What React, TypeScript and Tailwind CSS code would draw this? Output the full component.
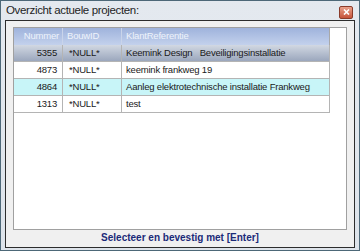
import React from "react";

const rows = [
  { n: "5355", b: "*NULL*", k: "Keemink Design   Beveiligingsinstallatie", kind: "sel" },
  { n: "4873", b: "*NULL*", k: "keemink frankweg 19", kind: "white" },
  { n: "4864", b: "*NULL*", k: "Aanleg elektrotechnische installatie Frankweg", kind: "cyan" },
  { n: "1313", b: "*NULL*", k: "test", kind: "white" },
];

export default function App() {
  return (
    <div
      className="w-[360px] h-[251px] border border-[#4d6878] bg-gradient-to-b from-[#e4e9ef] to-[#dde3ea] flex flex-col overflow-hidden"
      style={{ fontFamily: '"Liberation Sans", Arial, sans-serif' }}
    >
      <div className="h-[19px] flex items-center justify-between pl-[5px] pr-[6px] shrink-0">
        <span className="text-[11.5px] tracking-[-0.35px] text-[#1e1e1e] leading-none mt-[1px]">Overzicht actuele projecten:</span>
        <div className="w-[14px] h-[13px] mt-[3px] rounded-[2px] border border-[#8a3b2a] bg-gradient-to-b from-[#e8a08a] to-[#c5533a] flex items-center justify-center">
          <svg width="7" height="6" viewBox="0 0 7 6">
            <path d="M1 0.5 L6 5.5 M6 0.5 L1 5.5" stroke="white" strokeWidth="1.6" />
          </svg>
        </div>
      </div>
      <div className="flex-1 mx-[4px] mb-[4px] border border-[#2c2c2c] bg-[#f0f0f0] flex flex-col">
        <div className="mx-[7px] mt-[6px] h-[203px] border border-[#a0a0a0] bg-white flex flex-col text-[9.5px] tracking-[-0.2px]">
          <div className="w-[316px] flex h-[17px] bg-gradient-to-b from-[#9fb3dc] to-[#c3d1ec] text-[#eef3fb] border-r border-[#a8a8a8]">
            <div className="w-[49px] shrink-0 flex items-center justify-end pr-[3px] border-r border-[#c9d4ea]">Nummer</div>
            <div className="w-[59px] shrink-0 flex items-center pl-[4px] border-r border-[#c9d4ea]">BouwID</div>
            <div className="flex-1 min-w-0 flex items-center pl-[4px]">KlantReferentie</div>
          </div>
          {rows.map((r) => (
            <div
              key={r.n}
              className={
                "w-[316px] flex h-[17px] text-[#1a1a1a] border-b border-r border-[#b4b4b4] " +
                (r.kind === "sel"
                  ? "bg-gradient-to-b from-[#d2d8e2] to-[#9ba7bd]"
                  : r.kind === "cyan"
                  ? "bg-[#c8f5f8]"
                  : "bg-white")
              }
            >
              <div className="w-[49px] shrink-0 flex items-center justify-end pr-[5px] border-r border-[#b4b4b4]">{r.n}</div>
              <div className="w-[59px] shrink-0 flex items-center pl-[6px] border-r border-[#b4b4b4]">{r.b}</div>
              <div className="flex-1 min-w-0 overflow-hidden flex items-center pl-[4px] whitespace-pre">{r.k}</div>
            </div>
          ))}
        </div>
        <div className="flex-1 flex items-center justify-center text-[10px] font-bold text-[#1b2a78] pb-[2px]">
          Selecteer en bevestig met [Enter]
        </div>
      </div>
    </div>
  );
}
